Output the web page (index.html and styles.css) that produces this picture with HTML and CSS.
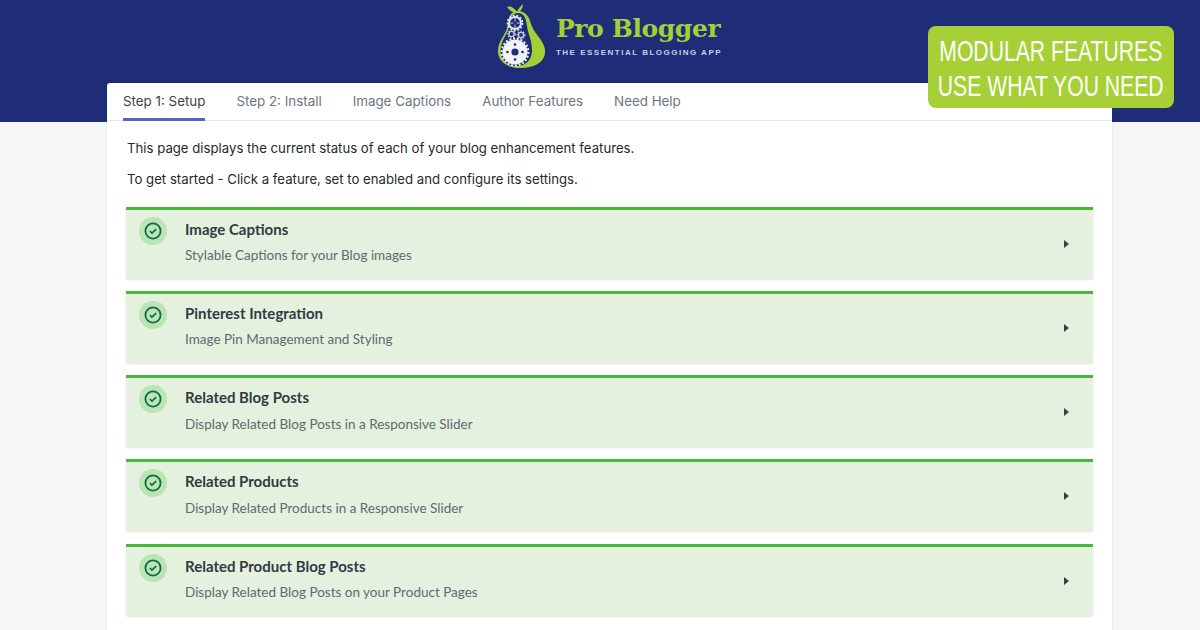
FILE: index.html
```html
<!DOCTYPE html>
<html lang="en">
<head>
    <meta charset="UTF-8">
    <meta name="viewport" content="width=device-width, initial-scale=1.0">
    <title>Pro Blogger</title>
    <link rel="stylesheet" href="styles.css">
</head>
<body>
    <header class="top-bar">
        <div class="logo">
            <svg class="pear" width="50" height="66" viewBox="0 0 50 66">
                <path d="M19 10 C15 4 11 4 9 5 C12 9 15 11 19 10 C20 7 22 5 25 2 C25 6 23 9 20 11 Z" fill="#a4d037"/>
                <path d="M20 9 C13 9 11 14 10 22 C9 32 0 38 0 49 C0 60 10 66 22 66 C36 66 48 60 47 48 C46 38 36 32 33 22 C31 14 27 9 20 9 Z" fill="#a4d037"/>
                <path d="M20 11 C14 11 12 16 11 24 C10 32 3 38 2.5 48 C2 58 10 64 18 64 C28 64 34 58 34 48 C34 38 30 32 29 24 C28 16 26 11 20 11 Z" fill="#1f2d78"/>
                <circle cx="17" cy="21" r="6" fill="none" stroke="#e4e6ee" stroke-width="1.8"/>
                <circle cx="17" cy="21" r="7.4" fill="none" stroke="#e4e6ee" stroke-width="1.8" stroke-dasharray="2 1.6"/>
                <path d="M17 16 V26 M12 21 H22" stroke="#c9cddc" stroke-width="1"/>
                <circle cx="17" cy="21" r="1.8" fill="#1f2d78"/>
                <circle cx="13.5" cy="32" r="2.6" fill="none" stroke="#c9cddc" stroke-width="1.4"/>
                <circle cx="13.5" cy="32" r="3.8" fill="none" stroke="#c9cddc" stroke-width="1.2" stroke-dasharray="1.4 1.4"/>
                <circle cx="23" cy="33" r="2.6" fill="none" stroke="#c9cddc" stroke-width="1.4"/>
                <circle cx="23" cy="33" r="3.8" fill="none" stroke="#c9cddc" stroke-width="1.2" stroke-dasharray="1.4 1.4"/>
                <circle cx="17" cy="50" r="12.5" fill="#f2f3f6"/>
                <circle cx="17" cy="50" r="13.4" fill="none" stroke="#f2f3f6" stroke-width="2" stroke-dasharray="2 1.8"/>
                <circle cx="17" cy="50" r="3.6" fill="#1f2d78"/>
                <circle cx="17" cy="42.5" r="1.3" fill="#1f2d78"/>
                <circle cx="17" cy="57.5" r="1.3" fill="#1f2d78"/>
                <circle cx="9.5" cy="50" r="1.3" fill="#1f2d78"/>
                <circle cx="24.5" cy="50" r="1.3" fill="#1f2d78"/>
            </svg>
            <div class="logo-text">
                <div class="logo-name">Pro Blogger</div>
                <div class="logo-tag">THE ESSENTIAL BLOGGING APP</div>
            </div>
        </div>
        <div class="promo">
            <span>MODULAR FEATURES</span>
            <span>USE WHAT YOU NEED</span>
        </div>
    </header>

    <main class="card">
        <nav class="tabs">
            <a class="tab active">Step 1: Setup</a>
            <a class="tab">Step 2: Install</a>
            <a class="tab">Image Captions</a>
            <a class="tab">Author Features</a>
            <a class="tab">Need Help</a>
        </nav>
        <div class="content">
            <p>This page displays the current status of each of your blog enhancement features.</p>
            <p>To get started - Click a feature, set to enabled and configure its settings.</p>

            <div class="features" id="features"></div>
        </div>
    </main>

    <script>
        const features = [
            { name: 'Image Captions', desc: 'Stylable Captions for your Blog images' },
            { name: 'Pinterest Integration', desc: 'Image Pin Management and Styling' },
            { name: 'Related Blog Posts', desc: 'Display Related Blog Posts in a Responsive Slider' },
            { name: 'Related Products', desc: 'Display Related Products in a Responsive Slider' },
            { name: 'Related Product Blog Posts', desc: 'Display Related Blog Posts on your Product Pages' }
        ];

        const list = document.getElementById('features');

        features.forEach(item => {
            const row = document.createElement('div');
            row.className = 'feature';
            row.innerHTML = `
                <span class="status">
                    <svg width="18" height="18" viewBox="0 0 18 18" fill="none" stroke="#0f6b4a">
                        <circle cx="9" cy="9" r="7.6" stroke-width="1.8"></circle>
                        <path d="M5.8 9.2 L8 11.2 L12.2 7.2" stroke-width="1.7"></path>
                    </svg>
                </span>
                <div class="feature-text">
                    <div class="feature-name">${item.name}</div>
                    <div class="feature-desc">${item.desc}</div>
                </div>
                <span class="arrow"></span>
            `;
            list.appendChild(row);
        });
    </script>
</body>
</html>
```

FILE: styles.css
```css
* {
    box-sizing: border-box;
    margin: 0;
    padding: 0;
}

html, body {
    height: 630px;
    overflow: hidden;
}

body {
    background-color: #f4f6f8;
    font-family: Inter, sans-serif;
}

.top-bar {
    position: relative;
    height: 122px;
    background-color: #1f2d78;
    display: flex;
    justify-content: center;
    padding: 2px 0 0 0;
}

.logo {
    display: flex;
    align-items: flex-start;
    gap: 8px;
    height: 68px;
    margin-left: 20px;
}

.logo-text {
    padding-top: 11px;
}

.logo-name {
    font-family: "DejaVu Serif", serif;
    font-weight: 700;
    font-size: 25px;
    line-height: 32px;
    letter-spacing: -0.4px;
    color: #a4d037;
    white-space: nowrap;
}

.logo-tag {
    margin-top: 2px;
    font-family: "Liberation Sans", sans-serif;
    font-weight: 700;
    font-size: 8px;
    line-height: 12px;
    letter-spacing: 1.5px;
    color: #c9cfe6;
    white-space: nowrap;
}

.promo {
    position: absolute;
    z-index: 2;
    left: 928px;
    top: 26px;
    width: 246px;
    height: 82px;
    padding-top: 3px;
    background-color: #a6d035;
    border-radius: 8px;
    display: flex;
    flex-direction: column;
    align-items: center;
    justify-content: center;
    gap: 4px;
    font-family: "Liberation Sans", sans-serif;
    font-size: 29px;
    line-height: 31px;
    color: #fff;
}

.promo span {
    white-space: nowrap;
    transform: scaleX(0.73);
}

.card {
    width: 1005px;
    height: 560px;
    margin: -39px 0 0 107px;
    position: relative;
    background: white;
    border-radius: 3px 3px 0 0;
    box-shadow: 0 0 2px rgba(0,0,0,0.12);
}

.tabs {
    display: flex;
    gap: 31px;
    height: 38px;
    padding-left: 16px;
    border-bottom: 1px solid #e6e8ec;
}

.tab {
    font-size: 13.36px;
    line-height: 36px;
    color: #6c7681;
    white-space: nowrap;
}

.tab.active {
    color: #3b4248;
    height: 38px;
    border-bottom: 3px solid #5563c1;
}

.content {
    padding: 17px 19px 0 19px;
}

.content p {
    padding-left: 1px;
    font-size: 13.2px;
    line-height: 20px;
    color: #24292e;
    margin-bottom: 11px;
}

.features {
    margin-top: 17.5px;
    display: flex;
    flex-direction: column;
    gap: 12.25px;
}

.feature {
    height: 72px;
    display: flex;
    align-items: flex-start;
    padding: 7px 24px 0 13px;
    background-color: #e3f1de;
    border-top: 3px solid #46b83a;
    border-radius: 0 0 3px 3px;
    box-shadow: 0 1px 2px rgba(0,0,0,0.12);
}

.status {
    flex: none;
    width: 28px;
    height: 28px;
    border-radius: 50%;
    background-color: #bbe5b3;
    display: flex;
    align-items: center;
    justify-content: center;
}

.feature-text {
    margin-left: 18px;
    padding-top: 2px;
    flex: 1;
    font-family: Lato, sans-serif;
}

.feature-name {
    font-size: 15px;
    font-weight: 700;
    line-height: 20px;
    color: #323a42;
}

.feature-desc {
    margin-top: 6.5px;
    font-size: 13.5px;
    line-height: 20px;
    color: #5f6b70;
}

.arrow {
    flex: none;
    margin-top: 23px;
    width: 0;
    height: 0;
    border-top: 4px solid transparent;
    border-bottom: 4px solid transparent;
    border-left: 5px solid #3a4148;
}
```
